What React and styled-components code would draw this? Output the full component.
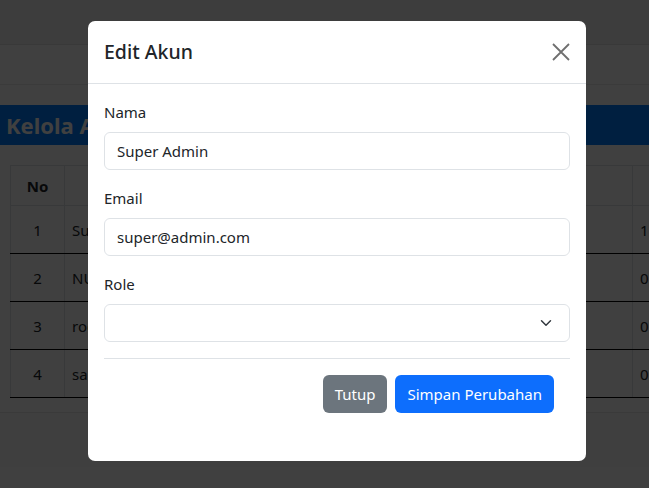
import styled, { createGlobalStyle } from "styled-components";

const GlobalStyle = createGlobalStyle`
  html, body {
    margin: 0;
    padding: 0;
  }
  body {
    font-family: "Noto Sans", "Open Sans", Arial, sans-serif;
    color: #212529;
    background: #fff;
  }
  * {
    box-sizing: border-box;
  }
`;

const users = [
  { no: 1, name: "Super Admin", flag: 1 },
  { no: 2, name: "NULL", flag: 0 },
  { no: 3, name: "root", flag: 0 },
  { no: 4, name: "sa", flag: 0 },
];

const App = () => {
  return (
    <>
      <GlobalStyle />
      <Page>
        <Navbar />
        <SubBar />
        <Spacer />
        <TitleBand>Kelola Akun</TitleBand>
        <TableWrap>
          <Table>
            <thead>
              <tr>
                <Th $w={54}>No</Th>
                <Th>Nama</Th>
                <Th $w={57} />
              </tr>
            </thead>
            <tbody>
              {users.map((u) => (
                <tr key={u.no}>
                  <Td $center>{u.no}</Td>
                  <Td>{u.name}</Td>
                  <Td>{u.flag}</Td>
                </tr>
              ))}
            </tbody>
          </Table>
        </TableWrap>
        <Footer />

        <Backdrop>
          <Dialog>
            <Header>
              <Title>Edit Akun</Title>
              <CloseButton aria-label="close">
                <svg width="18" height="18" viewBox="0 0 18 18">
                  <path
                    d="M1 1 L17 17 M17 1 L1 17"
                    stroke="#6f6f6f"
                    strokeWidth="1.8"
                    fill="none"
                  />
                </svg>
              </CloseButton>
            </Header>
            <Body>
              <Field>
                <Label>Nama</Label>
                <Input defaultValue="Super Admin" />
              </Field>
              <Field>
                <Label>Email</Label>
                <Input defaultValue="super@admin.com" />
              </Field>
              <Field>
                <Label>Role</Label>
                <SelectBox>
                  <svg width="16" height="12" viewBox="0 0 16 16">
                    <path
                      d="m2 5 6 6 6-6"
                      stroke="#343a40"
                      strokeWidth="2"
                      strokeLinecap="round"
                      strokeLinejoin="round"
                      fill="none"
                    />
                  </svg>
                </SelectBox>
              </Field>
              <Divider />
              <Actions>
                <Button $variant="secondary">Tutup</Button>
                <Button $variant="primary">Simpan Perubahan</Button>
              </Actions>
            </Body>
          </Dialog>
        </Backdrop>
      </Page>
    </>
  );
};

const Page = styled.div`
  position: relative;
  height: 488px;
  overflow: hidden;
  background: #fff;
`;

const Navbar = styled.div`
  height: 45px;
  background: #f3f3f3;
  border-bottom: 1px solid #e4e4e4;
`;

const SubBar = styled.div`
  height: 40px;
  background: #fff;
  border-bottom: 1px solid #ececec;
`;

const Spacer = styled.div`
  height: 20px;
`;

const TitleBand = styled.div`
  height: 40px;
  background: #007dff;
  color: #fff;
  font-size: 22px;
  font-weight: 700;
  line-height: 40px;
  padding-left: 6px;
`;

const TableWrap = styled.div`
  padding: 20px 0 0 10px;
  height: 268px;
  border-bottom: 1px solid #e6e6e6;
`;

const Table = styled.table`
  border-collapse: collapse;
  width: 680px;
  table-layout: fixed;
`;

const Th = styled.th`
  height: 40px;
  width: ${(p) => (p.$w ? `${p.$w}px` : "auto")};
  font-size: 15px;
  font-weight: 700;
  text-align: center;
  border: 1px solid #dee2e6;
`;

const Td = styled.td`
  height: 48px;
  font-size: 15px;
  padding: 0 7px;
  white-space: nowrap;
  text-align: ${(p) => (p.$center ? "center" : "left")};
  border-left: 1px solid #dee2e6;
  border-right: 1px solid #dee2e6;
  border-bottom: 1px solid #000;
`;

const Footer = styled.div`
  height: 54px;
  background: #fcfcfc;
`;

const Backdrop = styled.div`
  position: absolute;
  inset: 0;
  background: rgba(0, 0, 0, 0.75);
`;

const Dialog = styled.div`
  margin: 21px 0 0 88px;
  width: 498px;
  background: #fff;
  border-radius: 7px;
  overflow: hidden;
`;

const Header = styled.div`
  display: flex;
  align-items: center;
  justify-content: space-between;
  padding: 16px;
  border-bottom: 1px solid #dee2e6;
`;

const Title = styled.h5`
  margin: 0;
  font-size: 19.5px;
  font-weight: 500;
  line-height: 30px;
  color: #212529;
`;

const CloseButton = styled.button`
  display: flex;
  align-items: center;
  justify-content: center;
  width: 18px;
  height: 18px;
  padding: 0;
  border: 0;
  background: none;
`;

const Body = styled.div`
  padding: 16px 16px 48px;
`;

const Field = styled.div`
  margin-bottom: 16px;
`;

const Label = styled.div`
  font-size: 15px;
  line-height: 24px;
  margin-bottom: 8px;
  color: #212529;
`;

const Input = styled.input`
  display: block;
  width: 100%;
  height: 38px;
  padding: 6px 12px;
  font-family: inherit;
  font-size: 15px;
  color: #212529;
  border: 1px solid #dee2e6;
  border-radius: 6px;
  outline: none;
`;

const SelectBox = styled.div`
  display: flex;
  align-items: center;
  justify-content: flex-end;
  height: 38px;
  padding: 0 15px;
  border: 1px solid #dee2e6;
  border-radius: 6px;
`;

const Divider = styled.hr`
  margin: 0 0 16px;
  border: 0;
  border-top: 1px solid #dee2e6;
`;

const Actions = styled.div`
  display: flex;
  justify-content: flex-end;
  gap: 8px;
  padding-right: 16px;
`;

const Button = styled.button`
  height: 38px;
  padding: 0 12px;
  font-family: inherit;
  font-size: 15px;
  color: #fff;
  border: 0;
  border-radius: 6px;
  background: ${(p) => (p.$variant === "primary" ? "#0d6efd" : "#6c757d")};
`;

export default App;
